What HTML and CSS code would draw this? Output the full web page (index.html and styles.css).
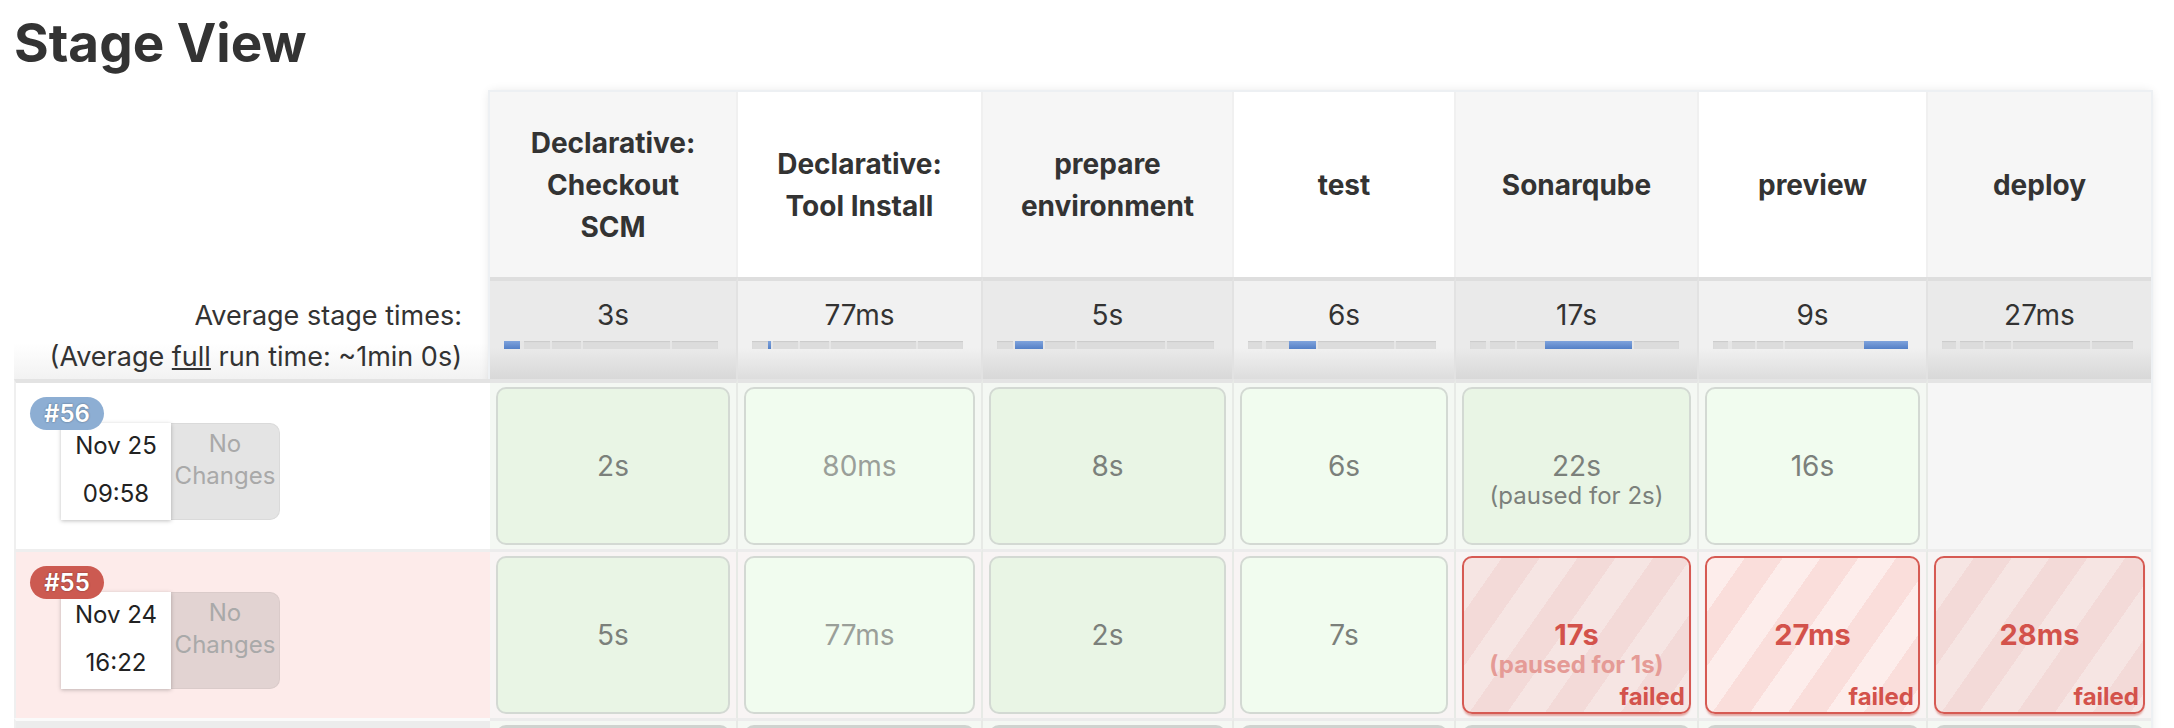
FILE: index.html
```html
<!DOCTYPE html>
<html>
<head>
<meta charset="utf-8">
<link rel="stylesheet" href="styles.css">
</head>
<body>
<div class="page">
  <h2 class="title">Stage View</h2>
  <div class="stage-view">
    <div class="left">
      <div class="left-head"></div>
      <div class="avg-label">
        <div>Average stage times:</div>
        <div>(Average <u>full</u> run time: ~1min 0s)</div>
      </div>
      <div class="job first ok">
        <span class="badge blue">#56</span>
        <div class="card"><div>Nov 25</div><div class="time">09:58</div></div>
        <div class="changes"><div>No</div><div>Changes</div></div>
      </div>
      <div class="job fail">
        <span class="badge red">#55</span>
        <div class="card"><div>Nov 24</div><div class="time">16:22</div></div>
        <div class="changes"><div>No</div><div>Changes</div></div>
      </div>
      <div class="job pending"></div>
    </div>

    <div class="table">
      <div class="th odd">Declarative:<br>Checkout<br>SCM</div>
      <div class="th even">Declarative:<br>Tool Install</div>
      <div class="th odd">prepare<br>environment</div>
      <div class="th even">test</div>
      <div class="th odd">Sonarqube</div>
      <div class="th even">preview</div>
      <div class="th odd last">deploy</div>

      <div class="avg odd"><div>3s</div>
        <div class="bar"><span class="seg on" style="width:7.5%"></span><span class="seg" style="width:0.5%"></span><span class="seg" style="width:13%"></span><span class="seg" style="width:14.5%"></span><span class="seg" style="width:41.5%"></span><span class="seg" style="width:22.5%"></span><span class="seg" style="width:0.5%"></span></div></div>
      <div class="avg even"><div>77ms</div>
        <div class="bar"><span class="seg" style="width:7.5%"></span><span class="seg on" style="width:0.5%"></span><span class="seg" style="width:13%"></span><span class="seg" style="width:14.5%"></span><span class="seg" style="width:41.5%"></span><span class="seg" style="width:22.5%"></span><span class="seg" style="width:0.5%"></span></div></div>
      <div class="avg odd"><div>5s</div>
        <div class="bar"><span class="seg" style="width:7.5%"></span><span class="seg" style="width:0.5%"></span><span class="seg on" style="width:13%"></span><span class="seg" style="width:14.5%"></span><span class="seg" style="width:41.5%"></span><span class="seg" style="width:22.5%"></span><span class="seg" style="width:0.5%"></span></div></div>
      <div class="avg even"><div>6s</div>
        <div class="bar"><span class="seg" style="width:7.5%"></span><span class="seg" style="width:0.5%"></span><span class="seg" style="width:13%"></span><span class="seg on" style="width:14.5%"></span><span class="seg" style="width:41.5%"></span><span class="seg" style="width:22.5%"></span><span class="seg" style="width:0.5%"></span></div></div>
      <div class="avg odd"><div>17s</div>
        <div class="bar"><span class="seg" style="width:7.5%"></span><span class="seg" style="width:0.5%"></span><span class="seg" style="width:13%"></span><span class="seg" style="width:14.5%"></span><span class="seg on" style="width:41.5%"></span><span class="seg" style="width:22.5%"></span><span class="seg" style="width:0.5%"></span></div></div>
      <div class="avg even"><div>9s</div>
        <div class="bar"><span class="seg" style="width:7.5%"></span><span class="seg" style="width:0.5%"></span><span class="seg" style="width:13%"></span><span class="seg" style="width:14.5%"></span><span class="seg" style="width:41.5%"></span><span class="seg on" style="width:22.5%"></span><span class="seg" style="width:0.5%"></span></div></div>
      <div class="avg odd last"><div>27ms</div>
        <div class="bar"><span class="seg" style="width:7.5%"></span><span class="seg" style="width:0.5%"></span><span class="seg" style="width:13%"></span><span class="seg" style="width:14.5%"></span><span class="seg" style="width:41.5%"></span><span class="seg" style="width:22.5%"></span><span class="seg on" style="width:0.5%"></span></div></div>

      <div class="cell r1 bgok"><div class="box g1"><div class="dur">2s</div></div></div>
      <div class="cell r1 bgok"><div class="box g2 light"><div class="dur">80ms</div></div></div>
      <div class="cell r1 bgok"><div class="box g1"><div class="dur">8s</div></div></div>
      <div class="cell r1 bgok"><div class="box g2"><div class="dur">6s</div></div></div>
      <div class="cell r1 bgok"><div class="box g1"><div class="dur">22s</div><div class="paused">(paused for 2s)</div></div></div>
      <div class="cell r1 bgok"><div class="box g2"><div class="dur">16s</div></div></div>
      <div class="cell r1 bgnone last"></div>

      <div class="cell bgfail"><div class="box g1"><div class="dur">5s</div></div></div>
      <div class="cell bgfail"><div class="box g2 light"><div class="dur">77ms</div></div></div>
      <div class="cell bgfail"><div class="box g1"><div class="dur">2s</div></div></div>
      <div class="cell bgfail"><div class="box g2"><div class="dur">7s</div></div></div>
      <div class="cell bgfail"><div class="box f f1"><div class="dur">17s</div><div class="paused">(paused for 1s)</div><div class="failed-lbl">failed</div></div></div>
      <div class="cell bgfail"><div class="box f f2"><div class="dur">27ms</div><div class="failed-lbl">failed</div></div></div>
      <div class="cell bgfail last"><div class="box f f1"><div class="dur">28ms</div><div class="failed-lbl">failed</div></div></div>

      <div class="cell bgok"><div class="box g1 grey"></div></div>
      <div class="cell bgok"><div class="box g2 grey"></div></div>
      <div class="cell bgok"><div class="box g1 grey"></div></div>
      <div class="cell bgok"><div class="box g2 grey"></div></div>
      <div class="cell bgok"><div class="box g1 grey"></div></div>
      <div class="cell bgok"><div class="box g2 grey"></div></div>
      <div class="cell bgok last"><div class="box g1 grey"></div></div>
    </div>
  </div>
</div>
</body>
</html>
```

FILE: styles.css
```css
* { box-sizing: border-box; }

body {
  margin: 0;
  font-family: Inter, "Noto Sans", "Liberation Sans", sans-serif;
  color: #333;
  background: #fff;
}

.page {
  padding: 12px 0 0 14px;
}

.title {
  font-size: 53px;
  font-weight: 700;
  line-height: 62px;
  margin: 0 0 18px;
  color: #333;
}

.stage-view {
  display: flex;
  align-items: flex-start;
}

/* left column */
.left {
  width: 476px;
  flex: none;
}

.left-head { height: 185px; }

.avg-label {
  height: 102px;
  padding: 18px 28px 0 0;
  text-align: right;
  font-size: 27px;
  line-height: 41px;
  background: linear-gradient(#fff 65%, #f2f2f2);
}

.job {
  position: relative;
  height: 169px;
  border-top: 3px solid #eeeeee;
  border-left: 2px solid #efefef;
  padding: 40px 0 0 45px;
  display: flex;
  align-items: flex-start;
}

.job.first {
  height: 170px;
  border-top: 4px solid #e3e3e3;
}

.job.ok { background: #fff; }
.job.fail { background: #fdebea; }
.job.pending { background: #ececec; border-top: 3px solid #fafafa; }

.badge {
  position: absolute;
  left: 14px;
  top: 14px;
  width: 74px;
  height: 33px;
  border-radius: 17px;
  color: #fff;
  font-size: 24px;
  font-weight: 600;
  line-height: 33px;
  text-align: center;
  text-shadow: 0 0 2px rgba(0, 0, 0, 0.45);
  z-index: 2;
}
.badge.blue { background: #8daed3; }
.badge.red { background: #cc5a51; }

.card {
  position: relative;
  z-index: 1;
  width: 110px;
  height: 97px;
  background: #fff;
  box-shadow: 0 1px 4px rgba(0, 0, 0, 0.25);
  padding-top: 5px;
  text-align: center;
  font-size: 24px;
  line-height: 36px;
  color: #222;
}
.card .time { margin-top: 12px; }

.changes {
  width: 109px;
  height: 97px;
  background: #e4e4e4;
  border: 1px solid #dadada;
  border-left: 0;
  border-radius: 0 10px 10px 0;
  color: #a9a9a9;
  text-align: center;
  font-size: 24px;
  line-height: 32px;
  padding-top: 4px;
}
.fail .changes {
  background: #e2d3d2;
  border-color: #dacbca;
}

/* stage table */
.table {
  display: grid;
  grid-template-columns: 248px 245px 251px 222px 243px 229px 223px;
  grid-template-rows: 185px 102px 170px 169px 169px;
  box-shadow: 0 0 0 2px #edf0f3, 0 0 10px rgba(0, 0, 0, 0.12);
}

.th {
  display: flex;
  align-items: center;
  justify-content: center;
  text-align: center;
  font-size: 28px;
  font-weight: 700;
  line-height: 42px;
  border-right: 2px solid #f0f0f0;
}
.th.odd { background: #f6f6f6; }
.th.even { background: #fff; }
.last { border-right: 0 !important; }

.avg {
  border-top: 4px solid #dedede;
  border-right: 2px solid #e2e2e2;
  padding-top: 14px;
  text-align: center;
  font-size: 28px;
  line-height: 40px;
  color: #333;
}
.avg.odd { background: linear-gradient(#eaeaea 68%, #d8d8d8); }
.avg.even { background: linear-gradient(#f1f1f1 68%, #dddddd); }

.bar {
  display: flex;
  height: 8px;
  margin: 6px 18px 0 14px;
  background: #dcdcdc;
  box-shadow: inset 0 1px 1px rgba(0, 0, 0, 0.08);
  overflow: hidden;
}
.seg { flex: 0 0 auto; height: 100%; }
.seg + .seg { border-left: 2px solid #e6e6e6; }
.seg.on {
  min-width: 3px;
  border-left: 0;
  background: linear-gradient(#7fa3dc, #5480c7);
}

.cell {
  padding: 4px 6px;
  border-top: 3px solid #ececec;
  border-right: 2px solid #e7eae6;
}
.cell.r1 { border-top: 4px solid #e4e4e4; }
.bgok { background: #f4f8f3; }
.bgfail { background: #f8f4f4; }
.bgnone { background: #f6f6f6; }

.box {
  height: 100%;
  border: 2px solid #d3d9d3;
  border-radius: 10px;
  display: flex;
  flex-direction: column;
  align-items: center;
  font-size: 28px;
  color: #7b807b;
}
.box.g1 { background: #e9f5e5; }
.box.g2 { background: #f1fcef; }
.box.light { color: #9a9f99; }
.box.grey { border-color: #cfd3cf; border-top-width: 4px; }

.dur {
  margin-top: 59px;
  line-height: 36px;
}
.paused {
  font-size: 24px;
  line-height: 24px;
}

.box.f {
  border-color: #d65a53;
  color: #d3524b;
  font-weight: 700;
  box-shadow: 0 3px 2px -1px rgba(200, 70, 60, 0.45);
}
.box.f .dur { font-size: 29px; }
.box.f1 { background: repeating-linear-gradient(125deg, #f6e5e3 0 31px, #f3dad8 31px 62px); }
.box.f2 { background: repeating-linear-gradient(125deg, #fdedeb 0 31px, #fadedb 31px 62px); }
.box.f .paused { color: #e59b96; }

.failed-lbl {
  margin-top: auto;
  align-self: flex-end;
  font-size: 24px;
  font-weight: 700;
  line-height: 30px;
  padding-right: 4px;
}
```
